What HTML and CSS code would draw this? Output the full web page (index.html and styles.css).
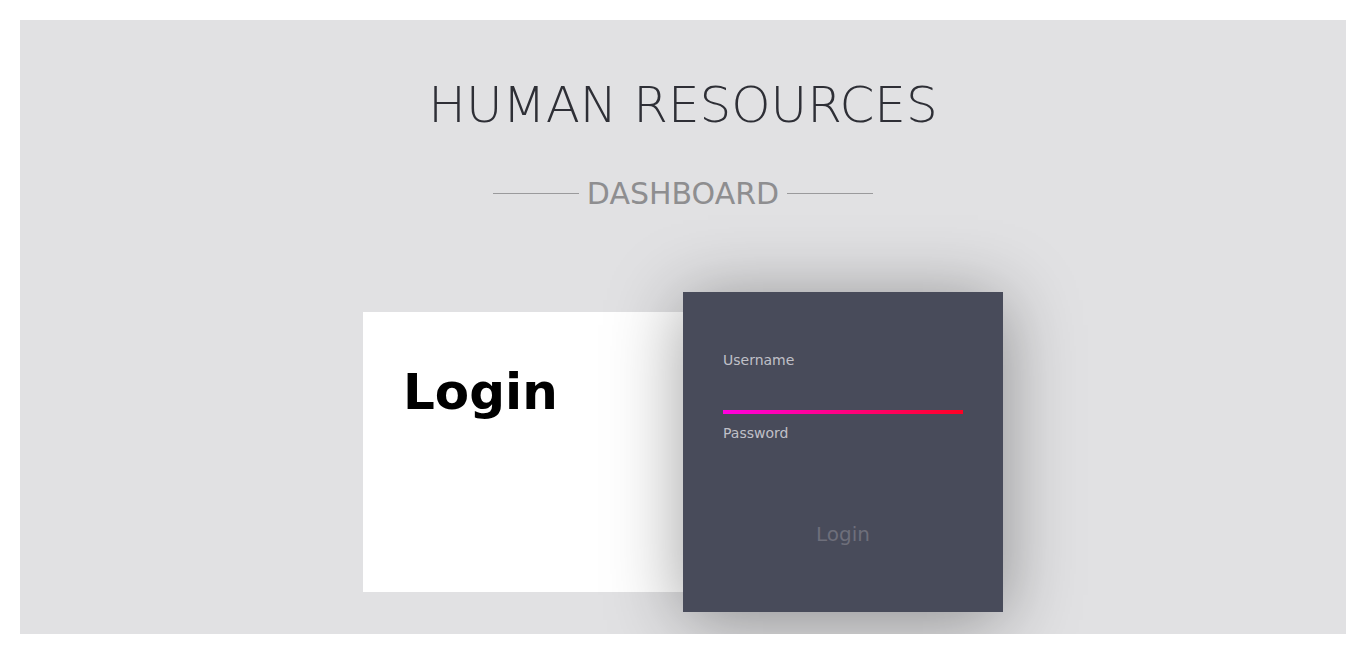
FILE: index.html
```html
<!DOCTYPE html>
<html lang="en">
<head>
    <meta charset="UTF-8">
    <meta name="viewport" content="width=device-width, initial-scale=1.0">
    <title>Human Resources</title>
    <link rel="stylesheet" href="styles.css">
</head>
<body>
    <div class="page">
        <h1 class="title">HUMAN RESOURCES</h1>
        <div class="subtitle">
            <span class="rule"></span>
            <span class="subtitle-text">DASHBOARD</span>
            <span class="rule"></span>
        </div>
        <div class="login-wrap">
            <div class="login-card">
                <h2>Login</h2>
            </div>
            <form class="login-panel">
                <label class="field-label" for="username">Username</label>
                <input class="field-input active" id="username" type="text">
                <label class="field-label" for="password">Password</label>
                <input class="field-input" id="password" type="password">
                <button class="login-btn" type="button">Login</button>
            </form>
        </div>
    </div>
</body>
</html>
```

FILE: styles.css
```css
body {
    margin: 20px;
    background: #ffffff;
    font-family: "DejaVu Sans", "Liberation Sans", sans-serif;
}
.page {
    background: #e1e1e3;
    padding: 56px 0 22px;
    display: flex;
    flex-direction: column;
    align-items: center;
}
.title {
    margin: 0;
    font-size: 50px;
    font-weight: 200;
    line-height: normal;
    color: #2e2f36;
}
.subtitle {
    display: flex;
    align-items: center;
    gap: 8px;
    margin-top: 42px;
}
.rule {
    width: 86px;
    height: 1px;
    background: #9a9a9c;
}
.subtitle-text {
    font-size: 30px;
    color: #8e8e90;
    line-height: normal;
}
.login-wrap {
    display: flex;
    align-items: center;
    margin-top: 81px;
}
.login-card {
    width: 320px;
    height: 280px;
    background: #ffffff;
    padding: 40px;
    box-sizing: border-box;
}
.login-card h2 {
    margin: 11px 0 0;
    font-size: 50px;
    font-weight: bold;
    line-height: normal;
    color: #000000;
}
.login-panel {
    width: 320px;
    height: 320px;
    box-sizing: border-box;
    padding: 60px 40px 0;
    background: #484b5a;
    box-shadow: 0 8px 70px rgba(0, 0, 0, 0.38);
    display: flex;
    flex-direction: column;
    position: relative;
    z-index: 1;
}
.field-label {
    font-size: 14px;
    color: #c0c0c8;
    line-height: normal;
}
.field-input {
    height: 42px;
    margin-bottom: 11px;
    border: none;
    border-bottom: 4px solid transparent;
    background: transparent;
    color: #ffffff;
    outline: none;
    padding: 0;
    font-family: inherit;
}
.field-input.active {
    border-image: linear-gradient(to right, #ff00e0, #ff0022) 1;
}
.login-btn {
    margin-top: 24px;
    align-self: center;
    border: none;
    background: transparent;
    font-family: inherit;
    font-size: 20px;
    color: #6e6f7b;
    padding: 0;
}
```
